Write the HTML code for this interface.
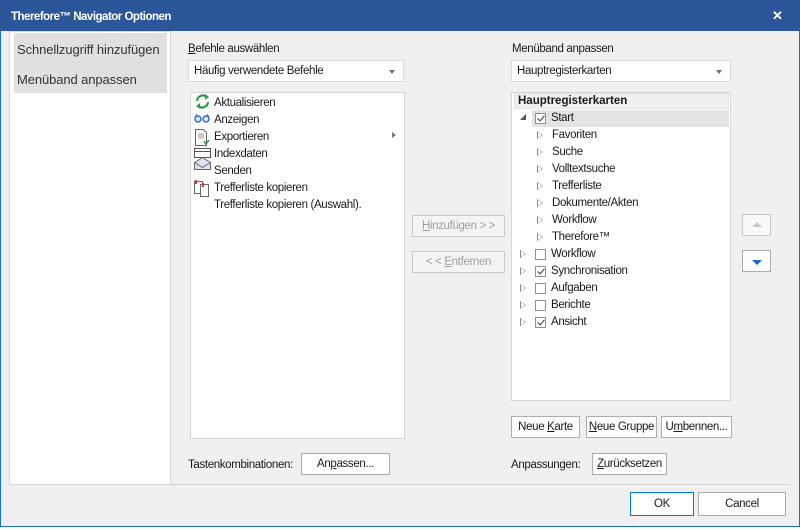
<!DOCTYPE html>
<html><head><meta charset="utf-8"><style>
*{box-sizing:border-box;margin:0;padding:0}
body{width:800px;height:529px;background:#fff;position:relative;overflow:hidden;font-family:"Liberation Sans",sans-serif;font-size:11.5px;color:#1a1a1a;letter-spacing:-0.35px}
.a{position:absolute;white-space:nowrap}
.win{position:absolute;left:0;top:0;width:800px;height:527px;background:#f0f0f0;border:1px solid #1d6fc4;border-top:1px solid #1979ca}
.title{position:absolute;left:-1px;top:-1px;width:800px;height:31px;background:#2b579a;color:#fff;font-size:12px;letter-spacing:-0.2px}
.box{position:absolute;background:#fff;border:1px solid #d6d6d6}
.dd{position:absolute;background:#fff;border:1px solid #d9d9d9;height:22px;padding:4px 5px}
.dd:after{content:"";position:absolute;right:8px;top:9px;border:3.5px solid transparent;border-top:4px solid #6d6d6d}
.btn{position:absolute;background:#fdfdfd;border:1px solid #adadad;text-align:center;line-height:20px;height:22px}
.dis{color:#a0a0a0;border-color:#c8c8c8;background:#f4f4f4}
u{text-decoration:underline}
.row{position:absolute;height:17px;line-height:17px}
.cb{position:absolute;width:11px;height:11px;border:1px solid #8f8f8f;background:#fff;top:3px}
.cb.c:after{content:"";position:absolute;left:3px;top:0px;width:3px;height:6px;border-right:1px solid #333;border-bottom:1px solid #333;transform:rotate(40deg)}
.tri{position:absolute;top:4px;width:0;height:0;border:4.5px solid transparent;border-left:6px solid #8a8a8a}
.tri:before{content:"";position:absolute;left:-5px;top:-3px;border:3px solid transparent;border-left:4px solid #fff}
</style></head><body>
<div class="win">
<div class="title"><span class="a" style="left:11px;top:11px;font-weight:bold;letter-spacing:-0.5px;font-size:11.5px">Therefore™ Navigator Optionen</span><span class="a" style="left:772px;top:8px;font-size:13px;font-weight:bold">✕</span></div>

<div class="box" style="left:8px;top:30px;width:162px;height:454px"></div>
<div class="a" style="left:13px;top:32px;width:153px;height:60px;background:#e0e0e0"></div>
<div class="a" style="left:16px;top:41px;font-size:13px;letter-spacing:-0.1px;color:#333">Schnellzugriff hinzufügen</div>
<div class="a" style="left:16px;top:71px;font-size:13px;letter-spacing:-0.1px;color:#333">Menüband anpassen</div>

<div class="a" style="left:187px;top:42px"><u>B</u>efehle auswählen</div>
<div class="dd" style="left:187px;top:59px;width:216px">Häufig verwendete Befehle</div>
<div class="box" style="left:189px;top:91px;width:215px;height:347px"></div>
<svg class="a" style="left:192px;top:92px" width="20" height="112" viewBox="0 0 20 112">
<path d="M4 8a6 6 0 0 1 10-4" stroke="#2a9d4a" stroke-width="2.2" fill="none"/><path d="M12 1l4 3-4 3z" fill="#2a9d4a"/>
<path d="M15 9a6 6 0 0 1-10 4" stroke="#2a9d4a" stroke-width="2.2" fill="none"/><path d="M7 16l-4-3 4-3z" fill="#2a9d4a"/>
<circle cx="5" cy="26" r="3" stroke="#3a6fc8" stroke-width="1.5" fill="#dde8f8"/><circle cx="13" cy="26" r="3" stroke="#3a6fc8" stroke-width="1.5" fill="#dde8f8"/><path d="M2 24l2-3M16 24l-2-3" stroke="#3a6fc8"/>
<path d="M2.5 36.5h8l3 3v13h-11z" stroke="#666" fill="#fff"/><path d="M5 41h6M5 43h6M5 45h6" stroke="#999"/><path d="M11 48l2 3 3-4" stroke="#2a9d4a" stroke-width="1.5" fill="none"/>
<rect x="1.5" y="55.5" width="16" height="9" stroke="#555" fill="#fff"/><path d="M2 58.5h15" stroke="#555"/>
<path d="M1.5 76.5h16v-7l-8-5-8 5z" stroke="#667" fill="#dde3ee"/><path d="M1.5 69.5l8 5 8-5" stroke="#667" fill="none"/>
<rect x="1.5" y="88.5" width="8" height="12" stroke="#666" fill="#fff"/><rect x="7.5" y="91.5" width="8" height="12" stroke="#666" fill="#fff"/><path d="M3 87v4M10 90v4" stroke="#d33" stroke-width="2"/>
</svg>
<div class="a" style="left:213px;top:94px;line-height:17px">Aktualisieren<br>Anzeigen<br>Exportieren<br>Indexdaten<br>Senden<br>Trefferliste kopieren<br>Trefferliste kopieren (Auswahl).</div>
<div class="a" style="left:391px;top:131px;border:3px solid transparent;border-left:4px solid #777"></div>

<div class="btn dis" style="left:411px;top:214px;width:93px"><u>H</u>inzufügen &gt; &gt;</div>
<div class="btn dis" style="left:411px;top:250px;width:93px">&lt; &lt; <u>E</u>ntfernen</div>

<div class="a" style="left:511px;top:42px">Menüband anpassen</div>
<div class="dd" style="left:510px;top:59px;width:220px">Hauptregisterkarten</div>
<div class="box" style="left:510px;top:91px;width:220px;height:309px"></div>
<div class="a" style="left:513px;top:92px;width:215px;height:16px;background:#efefef;border:1px solid #e4e4e4;font-weight:bold;padding-left:3px;line-height:14px;letter-spacing:0">Hauptregisterkarten</div>
<div class="a" style="left:531px;top:109px;width:197px;height:17px;background:#e3e3e3"></div>
<div class="a" style="left:519px;top:113px;border:3px solid transparent;border-right-color:#555;border-bottom-color:#555"></div>
<div class="row" style="left:534px;top:109px"><div class="cb c" style="left:0"></div><span style="margin-left:16px">Start</span></div>
<div class="row" style="left:536px;top:126px"><div class="tri"></div><span style="margin-left:15px">Favoriten</span></div>
<div class="row" style="left:536px;top:143px"><div class="tri"></div><span style="margin-left:15px">Suche</span></div>
<div class="row" style="left:536px;top:160px"><div class="tri"></div><span style="margin-left:15px">Volltextsuche</span></div>
<div class="row" style="left:536px;top:177px"><div class="tri"></div><span style="margin-left:15px">Trefferliste</span></div>
<div class="row" style="left:536px;top:194px"><div class="tri"></div><span style="margin-left:15px">Dokumente/Akten</span></div>
<div class="row" style="left:536px;top:211px"><div class="tri"></div><span style="margin-left:15px">Workflow</span></div>
<div class="row" style="left:536px;top:228px"><div class="tri"></div><span style="margin-left:15px">Therefore™</span></div>
<div class="row" style="left:519px;top:245px"><div class="tri"></div><div class="cb" style="left:15px"></div><span style="margin-left:31px">Workflow</span></div>
<div class="row" style="left:519px;top:262px"><div class="tri"></div><div class="cb c" style="left:15px"></div><span style="margin-left:31px">Synchronisation</span></div>
<div class="row" style="left:519px;top:279px"><div class="tri"></div><div class="cb" style="left:15px"></div><span style="margin-left:31px">Aufgaben</span></div>
<div class="row" style="left:519px;top:296px"><div class="tri"></div><div class="cb" style="left:15px"></div><span style="margin-left:31px">Berichte</span></div>
<div class="row" style="left:519px;top:313px"><div class="tri"></div><div class="cb c" style="left:15px"></div><span style="margin-left:31px">Ansicht</span></div>

<div class="btn dis" style="left:741px;top:213px;width:29px;background:#f8f8f8"><div class="a" style="left:9px;top:7px;border:5px solid transparent;border-bottom:5px solid #c8c8c8;border-top:0"></div></div>
<div class="btn" style="left:741px;top:249px;width:29px;border-color:#adadad"><div class="a" style="left:9px;top:9px;border:5px solid transparent;border-top:5px solid #1766c6;border-bottom:0"></div></div>

<div class="btn" style="left:510px;top:415px;width:69px">Neue <u>K</u>arte</div>
<div class="btn" style="left:585px;top:415px;width:71px"><u>N</u>eue Gruppe</div>
<div class="btn" style="left:660px;top:415px;width:71px">U<u>m</u>bennen...</div>

<div class="a" style="left:187px;top:458px">Tastenkombinationen:</div>
<div class="btn" style="left:300px;top:452px;width:89px">An<u>p</u>assen...</div>
<div class="a" style="left:510px;top:458px">Anpassungen:</div>
<div class="btn" style="left:591px;top:452px;width:75px"><u>Z</u>urücksetzen</div>

<div class="a" style="left:8px;top:483px;width:781px;height:1px;background:#d6d6d6"></div>
<div class="btn" style="left:629px;top:491px;width:64px;height:24px;line-height:22px;border-color:#0078d7">OK</div>
<div class="btn" style="left:697px;top:491px;width:88px;height:24px;line-height:22px">Cancel</div>
</div>
</body></html>
